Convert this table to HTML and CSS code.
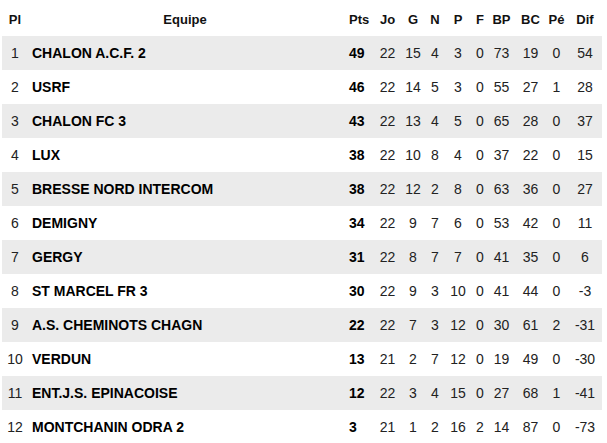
FILE: index.html
```html
<!DOCTYPE html>
<html lang="fr">
<head>
<meta charset="utf-8">
<title>Classement</title>
<link rel="stylesheet" href="styles.css">
</head>
<body>
<div class="wrap">
<table class="standings">
<colgroup>
<col class="c-pl"><col class="c-team"><col class="c-pts"><col class="c-jo"><col class="c-g"><col class="c-n"><col class="c-p"><col class="c-f"><col class="c-bp"><col class="c-bc"><col class="c-pe"><col class="c-dif">
</colgroup>
<thead>
<tr><th>Pl</th><th>Equipe</th><th class="pts">Pts</th><th>Jo</th><th>G</th><th>N</th><th>P</th><th>F</th><th>BP</th><th>BC</th><th>Pé</th><th>Dif</th></tr>
</thead>
<tbody>
<tr><td>1</td><td class="team">CHALON A.C.F. 2</td><td class="pts">49</td><td>22</td><td>15</td><td>4</td><td>3</td><td>0</td><td>73</td><td>19</td><td>0</td><td>54</td></tr>
<tr><td>2</td><td class="team">USRF</td><td class="pts">46</td><td>22</td><td>14</td><td>5</td><td>3</td><td>0</td><td>55</td><td>27</td><td>1</td><td>28</td></tr>
<tr><td>3</td><td class="team">CHALON FC 3</td><td class="pts">43</td><td>22</td><td>13</td><td>4</td><td>5</td><td>0</td><td>65</td><td>28</td><td>0</td><td>37</td></tr>
<tr><td>4</td><td class="team">LUX</td><td class="pts">38</td><td>22</td><td>10</td><td>8</td><td>4</td><td>0</td><td>37</td><td>22</td><td>0</td><td>15</td></tr>
<tr><td>5</td><td class="team">BRESSE NORD INTERCOM</td><td class="pts">38</td><td>22</td><td>12</td><td>2</td><td>8</td><td>0</td><td>63</td><td>36</td><td>0</td><td>27</td></tr>
<tr><td>6</td><td class="team">DEMIGNY</td><td class="pts">34</td><td>22</td><td>9</td><td>7</td><td>6</td><td>0</td><td>53</td><td>42</td><td>0</td><td>11</td></tr>
<tr><td>7</td><td class="team">GERGY</td><td class="pts">31</td><td>22</td><td>8</td><td>7</td><td>7</td><td>0</td><td>41</td><td>35</td><td>0</td><td>6</td></tr>
<tr><td>8</td><td class="team">ST MARCEL FR 3</td><td class="pts">30</td><td>22</td><td>9</td><td>3</td><td>10</td><td>0</td><td>41</td><td>44</td><td>0</td><td>-3</td></tr>
<tr><td>9</td><td class="team">A.S. CHEMINOTS CHAGN</td><td class="pts">22</td><td>22</td><td>7</td><td>3</td><td>12</td><td>0</td><td>30</td><td>61</td><td>2</td><td>-31</td></tr>
<tr><td>10</td><td class="team">VERDUN</td><td class="pts">13</td><td>21</td><td>2</td><td>7</td><td>12</td><td>0</td><td>19</td><td>49</td><td>0</td><td>-30</td></tr>
<tr><td>11</td><td class="team">ENT.J.S. EPINACOISE</td><td class="pts">12</td><td>22</td><td>3</td><td>4</td><td>15</td><td>0</td><td>27</td><td>68</td><td>1</td><td>-41</td></tr>
<tr><td>12</td><td class="team">MONTCHANIN ODRA 2</td><td class="pts">3</td><td>21</td><td>1</td><td>2</td><td>16</td><td>2</td><td>14</td><td>87</td><td>0</td><td>-73</td></tr>
</tbody>
</table>
</div>
</body>
</html>
```
FILE: styles.css
```css
html, body {
  margin: 0;
  padding: 0;
  background: #ffffff;
}
body {
  font-family: "Liberation Sans", Arial, sans-serif;
  color: #1a1a1a;
}
.wrap {
  padding: 2px 0 0 2px;
}
.standings {
  table-layout: fixed;
  width: 600px;
  border-collapse: collapse;
  border-spacing: 0;
}
.c-pl { width: 26px; }
.c-team { width: 314px; }
.c-pts { width: 34px; }
.c-jo { width: 23px; }
.c-g { width: 28px; }
.c-n { width: 16px; }
.c-p { width: 30px; }
.c-f { width: 14px; }
.c-bp { width: 29px; }
.c-bc { width: 29px; }
.c-pe { width: 23px; }
.c-dif { width: 34px; }

.standings th,
.standings td {
  padding: 0;
  text-align: center;
  vertical-align: middle;
  white-space: nowrap;
  overflow: visible;
}
.standings th {
  height: 34px;
  font-size: 13px;
  font-weight: bold;
  color: #111111;
}
.standings td {
  height: 34px;
  font-size: 14px;
  color: #222222;
}
.standings tbody tr:nth-child(odd) {
  background: #ebebeb;
}
.standings td.team {
  text-align: left;
  padding-left: 4px;
  font-weight: bold;
  color: #000000;
}
.standings .pts {
  text-align: left;
  padding-left: 7px;
}
.standings td.pts {
  font-weight: bold;
  color: #000000;
}
```
